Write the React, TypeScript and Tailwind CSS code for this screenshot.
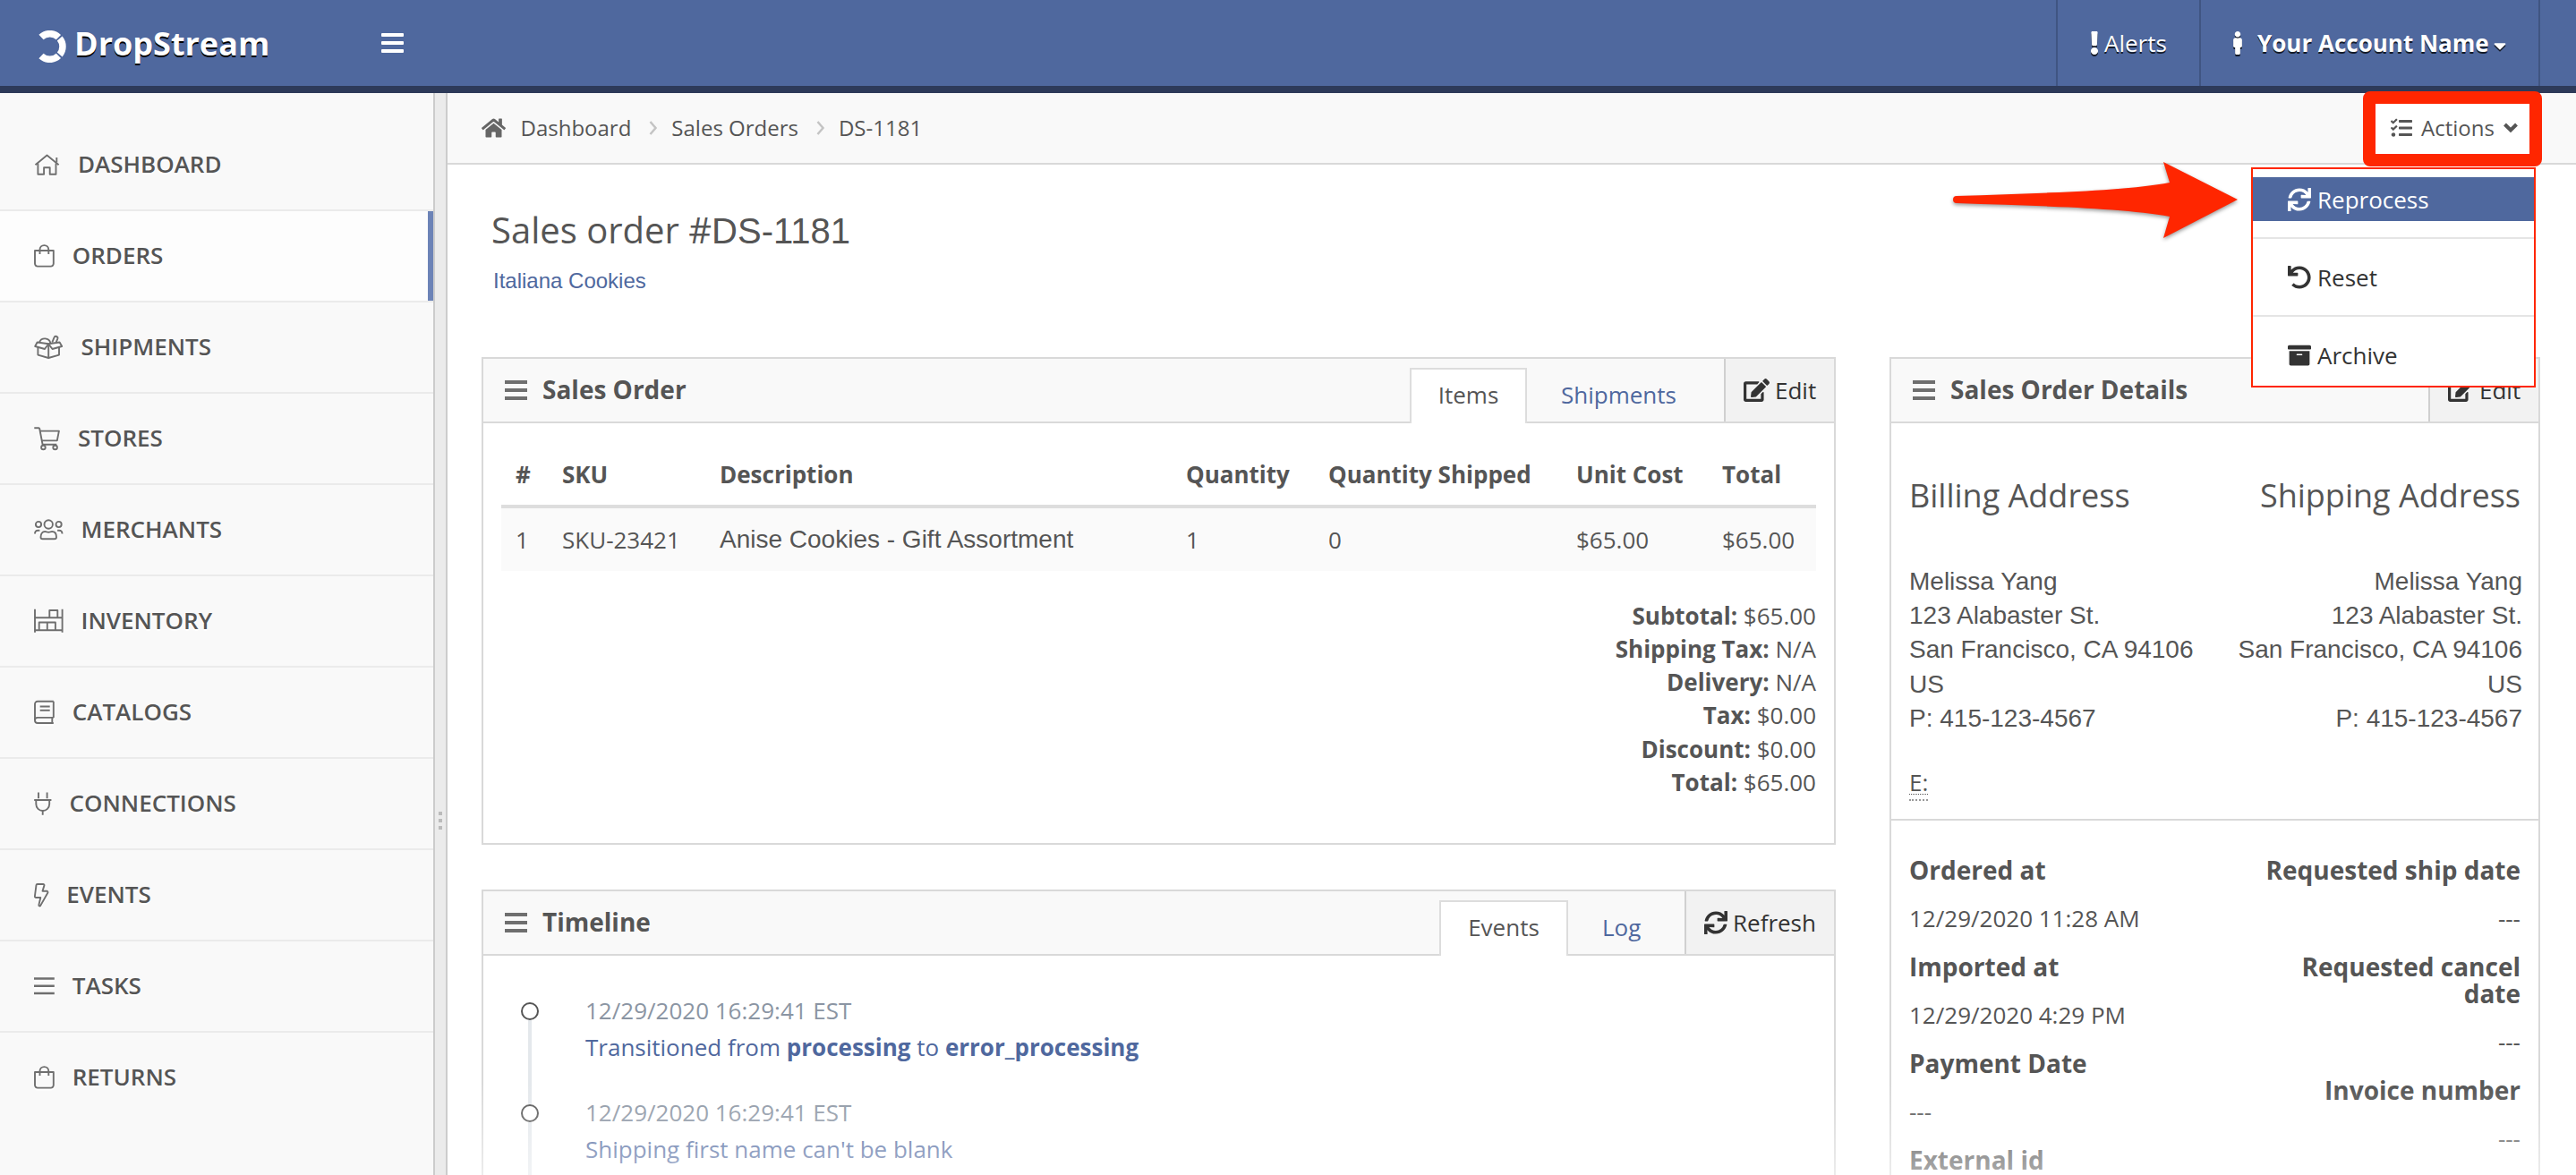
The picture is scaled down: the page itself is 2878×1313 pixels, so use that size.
import type { ReactNode } from "react";
import clsx from "clsx";
import {
  FaArchive,
  FaCaretDown,
  FaEdit,
  FaExclamation,
  FaHome,
  FaMale,
  FaSync,
  FaTasks,
  FaUndo,
} from "react-icons/fa";

const bagIcon = (
  <>
    <path d="M1 8h20.8v14.6a3 3 0 0 1-3 3H4a3 3 0 0 1-3-3Z" />
    <path d="M6.5 12V7a4.9 4.9 0 0 1 9.8 0v5" />
  </>
);

const navItems: { label: string; width: number; icon: ReactNode }[] = [
  {
    label: "DASHBOARD",
    width: 29,
    icon: (
      <>
        <path d="M1.5 14.3 14.5 3.6 27.6 14.3" />
        <path d="M25.3 6v5.5" />
        <path d="M4.4 12.5v12.2h6.7v-7.4h6.6v7.4h6.8V12.5" />
      </>
    ),
  },
  { label: "ORDERS", width: 22.75, icon: bagIcon },
  {
    label: "SHIPMENTS",
    width: 32.5,
    icon: (
      <>
        <path d="M4.4 14v8.6L16.2 26 28 22.6V14" />
        <path d="M16.2 10v16" />
        <path d="M3.6 8.5 16.2 10.2 12 16 1.2 13Z" />
        <path d="M28.6 8.5 16.2 10.2 20.5 16 31.2 13Z" />
        <path d="M6 8.3a6.6 6.6 0 0 1 12.4 1" />
        <path d="m20.3 8.6 2.2-5.4a2 2 0 0 1 3.8 1.4L24.8 8.4" />
      </>
    ),
  },
  {
    label: "STORES",
    width: 29,
    icon: (
      <>
        <path d="M.3 2.2h4.9c.5 0 .9.3 1 .8L9.6 20.8H25.3" />
        <path d="M6.6 5.6h21.3L25.8 16.4H8.8" />
        <circle cx="10.4" cy="24" r="2.3" />
        <circle cx="23.6" cy="24" r="2.3" />
      </>
    ),
  },
  {
    label: "MERCHANTS",
    width: 32.5,
    icon: (
      <>
        <circle cx="16.2" cy="8" r="4.7" />
        <circle cx="5" cy="8" r="3.1" />
        <circle cx="27.6" cy="8" r="3.1" />
        <path d="M1 18.4c0-2.2 1.3-3.7 3.4-3.7h2M31.5 18.4c0-2.2-1.3-3.7-3.4-3.7h-2" />
        <path d="M7.5 22.3c0-3.8 1.7-6.3 4.8-6.3 1.5 0 2.2.7 3.9.7s2.4-.7 3.9-.7c3.1 0 4.9 2.5 4.9 6.3 0 1.3-.8 2-2 2H9.5c-1.2 0-2-.7-2-2Z" />
      </>
    ),
  },
  {
    label: "INVENTORY",
    width: 32.5,
    icon: (
      <>
        <path d="M1 .7v26M31.6 .7v26M1 10.2h30.6M1 24.2h30.6" />
        <path d="M17.3 10.2V2h9v8.2M5.7 24.2v-8.7h18.2v8.7M14.8 15.5v8.7" />
      </>
    ),
  },
  {
    label: "CATALOGS",
    width: 22.75,
    icon: (
      <>
        <path d="M21.8 1.7H4a3 3 0 0 0-3 3V23a3 3 0 0 0 3 3h17.8M21.8 1.7v18.2M20.3 20v6" />
        <path d="M1 23a3.1 3.1 0 0 1 3-3.1h17.8M6.7 7.5h11M6.7 11.7h11" />
      </>
    ),
  },
  {
    label: "CONNECTIONS",
    width: 19.5,
    icon: (
      <>
        <path d="M5 1.5v6.8M14.6 1.5v6.8M.2 10h19.2M9.7 22.3v4.5" />
        <path d="M2.3 10v4.6a7.4 7.4 0 0 0 14.9 0V10" />
      </>
    ),
  },
  {
    label: "EVENTS",
    width: 16.25,
    icon: (
      <path d="M2.5 3.2c.1-.7.6-1.2 1.3-1.2h6.4c.9 0 1.5.8 1.2 1.6L9.5 9.7h4.7c1 0 1.6 1.1 1.1 2L7.3 25.9c-.7 1-2.2.5-1.9-.8L7.3 17H2.2c-.8 0-1.4-.7-1.3-1.5Z" />
    ),
  },
  {
    label: "TASKS",
    width: 22.75,
    icon: <path strokeWidth="2.5" d="M0 5.6h22.8M0 13.7h22.8M0 21.9h22.8" />,
  },
  { label: "RETURNS", width: 22.75, icon: bagIcon },
];

const totals = [
  ["Subtotal:", "$65.00"],
  ["Shipping Tax:", "N/A"],
  ["Delivery:", "N/A"],
  ["Tax:", "$0.00"],
  ["Discount:", "$0.00"],
  ["Total:", "$65.00"],
];

const address = ["Melissa Yang", "123 Alabaster St.", "San Francisco, CA 94106", "US", "P: 415-123-4567"];

const leftDetails = [
  ["Ordered at", "12/29/2020 11:28 AM"],
  ["Imported at", "12/29/2020 4:29 PM"],
  ["Payment Date", "---"],
  ["External id", ""],
];

const rightDetails = [
  ["Requested ship date", "---"],
  ["Requested cancel date", "---"],
  ["Invoice number", "---"],
];

const menuItems = [
  { label: "Reprocess", Icon: FaSync },
  { label: "Reset", Icon: FaUndo },
  { label: "Archive", Icon: FaArchive },
];

function Header() {
  return (
    <header className="flex h-[104px] shrink-0 border-b-8 border-[#2d3a59] bg-[#4f689e] text-[26px] text-white">
      <div className="flex w-[426px] items-center pl-[38px] [text-shadow:0_2px_0_#000]">
        <svg className="mt-2 h-[36px] w-[36px]" viewBox="0 0 36 36" fill="none" stroke="#fff" strokeWidth="7.5">
          <path d="M8 7.5A14 14 0 0 1 27.4 7.6M28.7 9a14 14 0 0 1 0 18M27.4 28.4A14 14 0 0 1 8 28.5" />
        </svg>
        <span className="ml-[9px] pt-[2px] text-[36px] font-bold">DropStream</span>
      </div>
      <button className="flex flex-col justify-center gap-[5px]">
        <span className="h-[4px] w-[25px] rounded-[1px] bg-white" />
        <span className="h-[4px] w-[25px] rounded-[1px] bg-white" />
        <span className="h-[4px] w-[25px] rounded-[1px] bg-white" />
      </button>
      <div className="ml-auto flex pr-[40px]">
        <a className="flex w-[160px] items-center border-l-2 border-[#405582] pl-[36px] [text-shadow:0_2px_0_rgba(0,0,0,0.75)]">
          <FaExclamation className="h-[26px] w-[10px] drop-shadow-[0_2px_0_rgba(0,0,0,0.75)]" />
          <span className="ml-[6px]">Alerts</span>
        </a>
        <a className="flex w-[381px] items-center border-x-2 border-[#405582] pl-[36px] font-bold [text-shadow:0_2px_0_rgba(0,0,0,0.75)]">
          <FaMale className="h-[26px] w-[10px] drop-shadow-[0_2px_0_rgba(0,0,0,0.75)]" />
          <span className="ml-[17px]">Your Account Name</span>
          <FaCaretDown className="mt-[5px] ml-[3px] h-[22px] w-[18px] drop-shadow-[0_2px_0_rgba(0,0,0,0.75)]" />
        </a>
      </div>
    </header>
  );
}

function Sidebar() {
  return (
    <>
      <nav className="w-[484px] shrink-0 bg-[#f9f9f9] pt-[30px]">
        {navItems.map((item, i) => (
          <a
            key={item.label}
            className={clsx(
              "flex h-[102px] items-center gap-[20px] border-b-2 pb-[2px] pl-[38px] text-[26px] font-semibold text-[#555] [text-shadow:0_2px_0_#fff]",
              i === navItems.length - 1 ? "border-transparent" : "border-[#ebebeb]",
              item.label === "ORDERS" && "bg-[linear-gradient(to_left,#6c83b7_6px,#fdfdfd_6px)]",
            )}
          >
            <svg
              className="h-[26px] shrink-0 overflow-visible drop-shadow-[0_2px_0_#fff]"
              style={{ width: item.width }}
              viewBox={`0 0 ${item.width} 26`}
              fill="none"
              stroke="#6f6f6f"
              strokeWidth="1.9"
              strokeLinejoin="round"
            >
              {item.icon}
            </svg>
            {item.label}
          </a>
        ))}
      </nav>
      <div className="flex w-[16px] shrink-0 flex-col items-center gap-[4px] border-x-2 border-[#ccc] bg-[#ebebeb] pt-[803px]">
        <span className="h-[4px] w-[4px] bg-[#bbb]" />
        <span className="h-[4px] w-[4px] bg-[#bbb]" />
        <span className="h-[4px] w-[4px] bg-[#bbb]" />
      </div>
    </>
  );
}

function Crumb() {
  return (
    <svg className="mr-[15px] ml-[20px] h-[16px] w-[10px]" viewBox="0 0 10 16" fill="none" stroke="#c4c4c4" strokeWidth="2.5">
      <path d="m1.5 1 6 7-6 7" />
    </svg>
  );
}

function ActionsMenu() {
  return (
    <div className="absolute top-[71px] right-[-7px] w-[318px] border-2 border-[#ff2600] bg-white pt-[9px] pb-[10px] text-[26px] text-[#333]">
      {menuItems.map(({ label, Icon }, i) => (
        <div key={label} className={clsx(i > 0 && "mt-[18px] border-t-2 border-[#e5e5e5] pt-[18px]")}>
          <div className={clsx("flex h-[49px] items-center gap-[7px] pt-[1px] pl-[39px]", i === 0 && "bg-[#4f689e] text-white")}>
            <Icon className="h-[26px] w-[26px]" />
            {label}
          </div>
        </div>
      ))}
    </div>
  );
}

function Breadcrumbs() {
  return (
    <div className="flex h-[80px] items-center border-b-2 border-[#d9d9d9] bg-[#f9f9f9] pr-[52px] pl-[38px] text-[24px] text-[#555]">
      <FaHome className="mr-[16.5px] h-[24px] w-[27px] text-[#666]" />
      Dashboard
      <Crumb />
      Sales Orders
      <Crumb />
      DS-1181
      <div className="relative z-10 mt-[2px] ml-auto flex h-[56px] w-[172px] items-center bg-white pb-[2px] pl-[17px]">
        <FaTasks className="h-[24px] w-[24px]" />
        <span className="ml-[10px]">Actions</span>
        <svg className="ml-[10px] h-[12px] w-[16px]" viewBox="0 0 16 12" fill="none" stroke="#555" strokeWidth="4">
          <path d="m1.5 2 6.5 6.5L14.5 2" />
        </svg>
        <span className="absolute -inset-[14px] rounded-[8px] border-[14px] border-[#ff2600]" />
        <ActionsMenu />
        <svg
          className="absolute top-[63px] right-[325px] h-[90px] w-[320px] drop-shadow-[0_2px_2px_rgba(0,0,0,0.4)]"
          viewBox="0 0 320 90"
          fill="#ff2600"
        >
          <path d="M5 40C90 37 190 35 243 25L236 2 319 44 236 87 243 63C190 53 90 51 5 48Q1 48 1 44T5 40Z" />
        </svg>
      </div>
    </div>
  );
}

function PanelHeader({ title, children }: { title: string; children: ReactNode }) {
  return (
    <div className="flex h-[72px] items-center border-b-2 border-[#d9d9d9] bg-[#f9f9f9] pl-[24px]">
      <div className="flex flex-col gap-[5.5px]">
        <span className="h-[3.5px] w-[25px] bg-[#6f6f6f]" />
        <span className="h-[3.5px] w-[25px] bg-[#6f6f6f]" />
        <span className="h-[3.5px] w-[25px] bg-[#6f6f6f]" />
      </div>
      <h2 className="mr-auto ml-[17px] pb-[3px] text-[28px] font-bold">{title}</h2>
      {children}
    </div>
  );
}

function Tabs({ active, other, activeWidth, otherWidth }: { active: string; other: string; activeWidth: string; otherWidth: string }) {
  return (
    <>
      <span className={clsx("-mb-[2px] flex h-[62px] items-center justify-center self-end border-2 border-b-0 border-[#ddd] bg-white pb-[3px]", activeWidth)}>
        {active}
      </span>
      <span className={clsx("flex h-[58px] items-center self-end pb-[1px] pl-[38px] text-[#4f689e]", otherWidth)}>{other}</span>
    </>
  );
}

function HeaderButton({ icon, label, width }: { icon: ReactNode; label: string; width: string }) {
  return (
    <button className={clsx("flex h-full items-center gap-[6px] border-l-2 border-[#d0d0d0] bg-[#f2f2f2] pl-[20px] text-[#333]", width)}>
      {icon}
      {label}
    </button>
  );
}

function SalesOrderPanel() {
  return (
    <section className="h-[545px] border-2 border-[#d9d9d9]">
      <PanelHeader title="Sales Order">
        <Tabs active="Items" other="Shipments" activeWidth="w-[131px]" otherWidth="w-[220px]" />
        <HeaderButton icon={<FaEdit className="h-[26px] w-[29px]" />} label="Edit" width="w-[123px]" />
      </PanelHeader>
      <div className="px-[20px]">
        <table className="mt-[22px] w-[1469px] table-fixed border-separate border-spacing-0 text-left">
          <thead>
            <tr className="[&>th]:h-[73px] [&>th]:border-b-4 [&>th]:border-[#ddd] [&>th]:pt-[2px] [&>th]:pl-[16px]">
              <th className="w-[52px]">#</th>
              <th className="w-[176px]">SKU</th>
              <th className="w-[521px]">Description</th>
              <th className="w-[159px]">Quantity</th>
              <th className="w-[277px]">Quantity Shipped</th>
              <th className="w-[163px]">Unit Cost</th>
              <th className="w-[121px]">Total</th>
            </tr>
          </thead>
          <tbody>
            <tr className="bg-[#fafafa] [&>td]:h-[70px] [&>td]:pl-[16px]">
              <td>1</td>
              <td>SKU-23421</td>
              <td className="font-['Liberation_Sans',sans-serif] text-[28px]">Anise Cookies - Gift Assortment</td>
              <td>1</td>
              <td>0</td>
              <td>$65.00</td>
              <td>$65.00</td>
            </tr>
          </tbody>
        </table>
        <div className="mt-[32px] text-right leading-[37.14px]">
          {totals.map(([label, value]) => (
            <p key={label}>
              <strong>{label}</strong> {value}
            </p>
          ))}
        </div>
      </div>
    </section>
  );
}

function TimelineEntry({ children }: { children: ReactNode }) {
  return (
    <li className="flex h-[114px] gap-[52px]">
      <div className="flex w-[20px] flex-col items-center pt-[11px]">
        <span className="h-[20px] w-[20px] shrink-0 rounded-full border-2 border-[#555] bg-white" />
        <span className="-mb-[11px] w-[4px] flex-1 bg-[#e4e8ec]" />
      </div>
      <div className="leading-[40.5px]">
        <p className="text-[#8b95a3]">12/29/2020 16:29:41 EST</p>
        <p className="text-[#4f689e]">{children}</p>
      </div>
    </li>
  );
}

function TimelinePanel() {
  return (
    <section className="mt-[50px] h-[400px] border-2 border-[#d9d9d9]">
      <PanelHeader title="Timeline">
        <Tabs active="Events" other="Log" activeWidth="w-[144px]" otherWidth="w-[130px]" />
        <HeaderButton icon={<FaSync className="h-[26px] w-[26px]" />} label="Refresh" width="w-[167px]" />
      </PanelHeader>
      <ul className="pt-[41px] pl-[42px]">
        <TimelineEntry>
          Transitioned from <strong>processing</strong> to <strong>error_processing</strong>
        </TimelineEntry>
        <TimelineEntry>Shipping first name can't be blank</TimelineEntry>
      </ul>
    </section>
  );
}

function DetailList({ items, className }: { items: string[][]; className?: string }) {
  return (
    <dl className={className}>
      {items.map(([label, value]) => (
        <div key={label}>
          <dt className="mb-[21px] text-[28px] leading-[30px] font-bold">{label}</dt>
          {value && <dd className="mb-[20px] leading-[37px]">{value}</dd>}
        </div>
      ))}
    </dl>
  );
}

function AddressBlock({ title, className }: { title: string; className?: string }) {
  return (
    <div className={className}>
      <h3 className="text-[36px] leading-[40px]">{title}</h3>
      <address className="mt-[57px] font-['Liberation_Sans',sans-serif] text-[28px] leading-[38.2px] not-italic">
        {address.map((line) => (
          <p key={line}>{line}</p>
        ))}
      </address>
    </div>
  );
}

function DetailsPanel() {
  return (
    <section className="h-[995px] w-[727px] shrink-0 border-2 border-[#d9d9d9]">
      <PanelHeader title="Sales Order Details">
        <HeaderButton icon={<FaEdit className="h-[26px] w-[29px]" />} label="Edit" width="w-[123px]" />
      </PanelHeader>
      <div className="h-[444px] border-b-2 border-[#d9d9d9] pt-[61px] pr-[18px] pl-[20px]">
        <div className="flex justify-between">
          <AddressBlock title="Billing Address" />
          <AddressBlock title="Shipping Address" className="text-right [&>h3]:pr-[2px]" />
        </div>
        <span className="mt-[33px] inline-block border-b-2 border-dotted border-[#999] leading-[38px] underline decoration-dotted decoration-1 underline-offset-[3px]">
          E:
        </span>
      </div>
      <div className="flex justify-between px-[20px] pt-[40px]">
        <DetailList items={leftDetails} />
        <DetailList items={rightDetails} className="w-[300px] text-right" />
      </div>
    </section>
  );
}

export default function App() {
  return (
    <div className="flex h-[1313px] w-[2878px] flex-col overflow-hidden bg-white font-['Open_Sans',sans-serif] text-[26px] text-[#555]">
      <Header />
      <div className="flex min-h-0 flex-1">
        <Sidebar />
        <main className="relative min-w-0 flex-1">
          <Breadcrumbs />
          <h1 className="mt-[45px] h-[56px] pl-[49px] text-[40px] leading-[56px]">
            Sales order #<span className="font-['Liberation_Sans',sans-serif]">DS-1181</span>
          </h1>
          <a className="mt-[12px] ml-[51px] block font-['Liberation_Sans',sans-serif] text-[24px] leading-[34px] text-[#4f689e]">
            Italiana Cookies
          </a>
          <div className="mt-[68px] flex gap-[60px] pl-[38px]">
            <div className="w-[1513px] shrink-0">
              <SalesOrderPanel />
              <TimelinePanel />
            </div>
            <DetailsPanel />
          </div>
          {/* content fades out towards the fold */}
          <div className="absolute inset-x-0 bottom-0 h-[103px] bg-gradient-to-b from-white/0 to-white/50" />
        </main>
      </div>
    </div>
  );
}
